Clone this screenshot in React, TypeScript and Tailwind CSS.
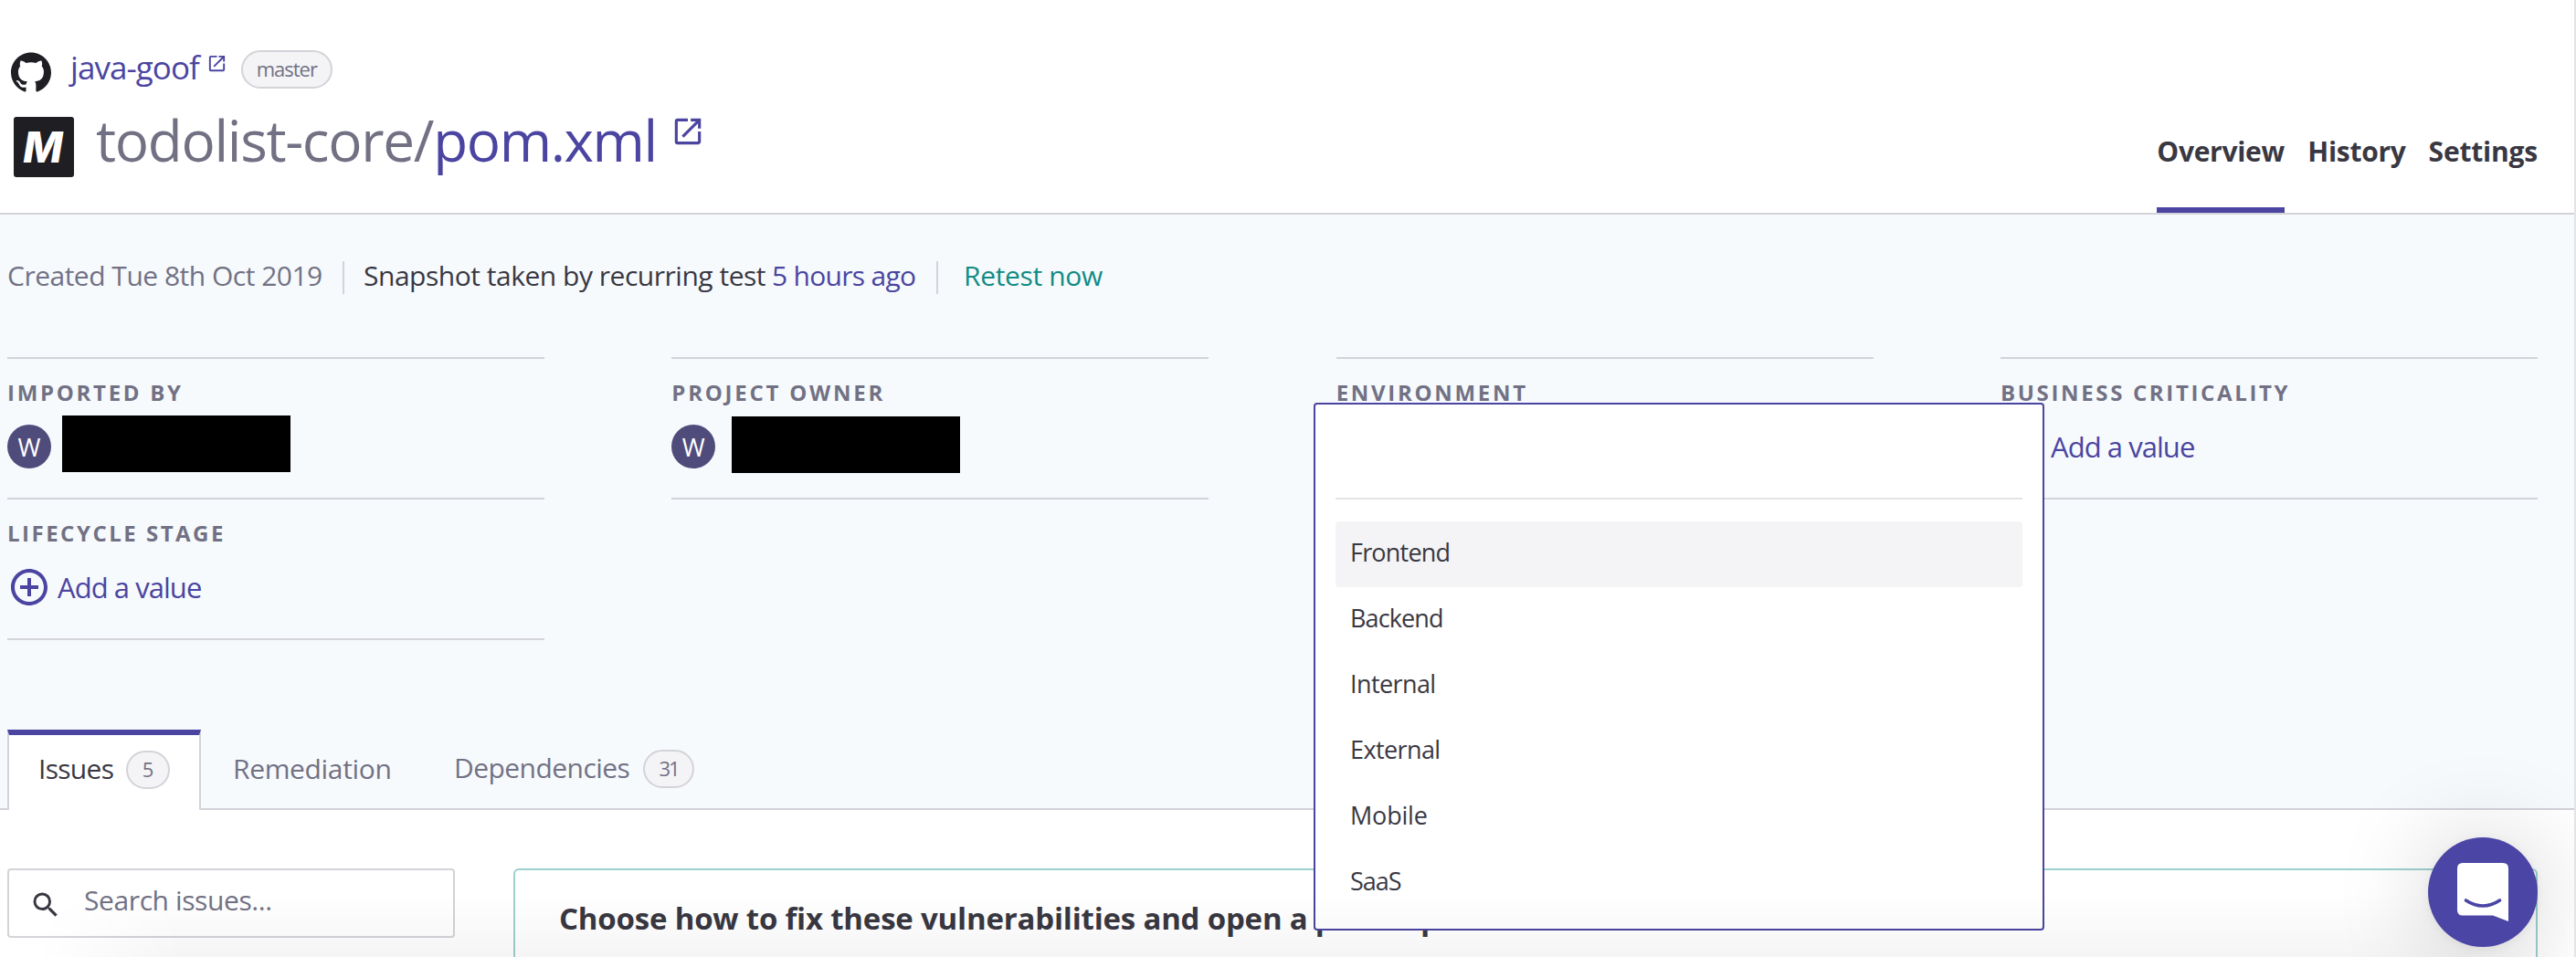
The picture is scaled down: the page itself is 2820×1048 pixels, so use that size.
import type { ReactNode } from 'react';
import { SiGithub } from 'react-icons/si';
import { MdAddCircleOutline, MdOpenInNew, MdSearch } from 'react-icons/md';

const ENVIRONMENTS = [
  { name: 'Frontend', tracking: 'tracking-[-0.8px]' },
  { name: 'Backend', tracking: 'tracking-[-0.9px]' },
  { name: 'Internal', tracking: 'tracking-[-0.6px]' },
  { name: 'External', tracking: 'tracking-[-0.6px]' },
  { name: 'Mobile', tracking: 'tracking-[-0.2px]' },
  { name: 'SaaS', tracking: 'tracking-[-1px]' },
];

function Attribute({
  label,
  tracking,
  className = '',
  children,
}: {
  label: string;
  tracking: string;
  className?: string;
  children?: ReactNode;
}) {
  return (
    <div className={`relative h-[156px] border-y-2 border-[#d3d3d9] pt-[22px] ${className}`}>
      <div className={`h-[30px] text-[24px] leading-[30px] font-bold whitespace-nowrap text-[#727184] ${tracking}`}>
        {label}
      </div>
      <div className="mt-[13px] flex h-[62px] items-center">{children}</div>
    </div>
  );
}

function Avatar() {
  return (
    <span className="flex size-12 shrink-0 items-center justify-center rounded-full bg-[#4f4c7c] text-[27px] leading-none text-white">
      W
    </span>
  );
}

function AddValue() {
  return (
    <a className="flex items-center text-[31px] leading-[42px] tracking-[-0.95px] whitespace-nowrap text-[#4b45a1]">
      <MdAddCircleOutline className="mr-[7px] size-12 shrink-0" />
      <span>Add a value</span>
    </a>
  );
}

function Badge({ className, children }: { className: string; children: ReactNode }) {
  return (
    <span
      className={`flex h-[42px] items-center justify-center rounded-full border-2 border-[#d3d3d9] bg-[#f4f4f6] pb-[3px] text-[22px] leading-none text-[#727184] ${className}`}
    >
      {children}
    </span>
  );
}

function EnvironmentMenu() {
  return (
    <div className="absolute top-[48px] left-[-24.67px] z-10 h-[578px] w-[800px] rounded-[4px] border-2 border-[#4b45a1] bg-white px-[22px]">
      <div className="h-[104px] border-b-2 border-[#e3e3e8]" />
      <ul className="mt-6">
        {ENVIRONMENTS.map((env, i) => (
          <li
            key={env.name}
            className={`flex h-[72px] items-center rounded-[4px] pb-[3px] pl-[16px] text-[27px] text-[#393842] ${env.tracking} ${i === 0 ? 'bg-[#f4f4f6]' : ''}`}
          >
            {env.name}
          </li>
        ))}
      </ul>
    </div>
  );
}

export default function App() {
  return (
    <div className="relative h-[1048px] w-[2820px] overflow-hidden border-r-2 border-[#e4e4e6] bg-white font-['Open_Sans','Noto_Sans',sans-serif] text-[#393842]">
      <header className="flex h-[235px] justify-between border-b-2 border-[#d3d3d9] pr-10">
        <div className="pt-[55px]">
          <div className="flex h-[42px] items-center">
            <SiGithub className="mt-[5px] ml-3 size-11 text-[#1f1e23]" />
            <a className="ml-[21px] pb-[4px] text-[35px] leading-[42px] tracking-[-0.95px] text-[#4b45a1]">java-goof</a>
            <MdOpenInNew className="mb-[14px] ml-[8px] size-[23px] text-[#4b45a1]" />
            <Badge className="ml-[15px] w-[100px] tracking-[-1px]">master</Badge>
          </div>
          <div className="mt-[16px] flex h-[80px] items-center">
            <span className="mt-4 ml-[15px] flex size-[66px] items-center justify-center rounded-[3px] bg-[#1f1e23] pr-[2px] font-['Inter'] text-[46px] leading-none font-extrabold text-white italic">
              M
            </span>
            <h1 className="ml-[24px] flex items-center text-[62px] leading-[80px] font-normal whitespace-nowrap text-[#727184]">
              <span className="tracking-[-1.3px]">todolist-core/</span>
              <a className="tracking-[-1.4px] text-[#4b45a1]">pom.xml</a>
            </h1>
            <MdOpenInNew className="mb-[18px] ml-[15px] size-[38px] text-[#4b45a1]" />
          </div>
        </div>
        <nav className="flex items-end gap-[25px] text-[30px] leading-[40px] font-bold tracking-[-0.3px]">
          <a className="w-[140px] border-b-[6px] border-[#4b45a1] pb-[41px]">Overview</a>
          <a className="pb-[47px]">History</a>
          <a className="pb-[47px] tracking-[-0.2px]">Settings</a>
        </nav>
      </header>

      <section className="h-[652px] border-b-2 border-[#d3d3d9] bg-[#f6fafd] pt-[51px]">
        <div className="flex h-9 items-center pl-2 text-[30px] leading-9 whitespace-nowrap">
          <span className="w-[367px] pb-[5px] tracking-[-0.5px] text-[#727184]">Created Tue 8th Oct 2019</span>
          <span className="h-9 w-[2px] bg-[#d3d3d9]" />
          <span className="ml-[21px] w-[447px] pb-[5px] tracking-[-0.48px]">Snapshot taken by recurring test</span>
          <a className="w-[180px] pb-[5px] tracking-[-0.7px] text-[#4b45a1]">5 hours ago</a>
          <span className="h-9 w-[2px] bg-[#d3d3d9]" />
          <a className="ml-[28px] pb-[5px] tracking-[-0.35px] text-[#118b84]">Retest now</a>
        </div>

        <div className="mt-[69px] grid grid-cols-4 gap-x-[139.33px] pr-10 pl-2">
          <Attribute label="IMPORTED BY" tracking="tracking-[2.7px]">
            <Avatar />
            <span className="mb-[6px] ml-3 h-[62px] w-[250px] bg-black" />
          </Attribute>
          <Attribute label="PROJECT OWNER" tracking="tracking-[2.75px]">
            <Avatar />
            <span className="mb-[4px] ml-[18px] h-[62px] w-[250px] bg-black" />
          </Attribute>
          <Attribute label="ENVIRONMENT" tracking="tracking-[2.7px]">
            <EnvironmentMenu />
          </Attribute>
          <Attribute label="BUSINESS CRITICALITY" tracking="tracking-[2.65px]">
            <AddValue />
          </Attribute>
          <Attribute label="LIFECYCLE STAGE" tracking="tracking-[2.5px]" className="-mt-[2px]">
            <AddValue />
          </Attribute>
        </div>

        <div className="mt-[98px] flex h-[88px] pl-2 text-[30px] leading-[40px] whitespace-nowrap text-[#727184]">
          <a className="flex h-[88px] w-[212px] items-center border-x-2 border-t-[6px] border-x-[#d3d3d9] border-t-[#4b45a1] bg-white pb-[6px] pl-[32px] text-[#393842]">
            <span className="w-[96px] pb-[2px] tracking-[-0.7px]">Issues</span>
            <Badge className="w-12">5</Badge>
          </a>
          <a className="flex items-center pb-[3px] pl-[35px] tracking-[-0.35px]">
            <span className="w-[242px]">Remediation</span>
          </a>
          <a className="flex items-center pb-[2px]">
            <span className="w-[207px] pb-[2px] tracking-[-0.55px]">Dependencies</span>
            <Badge className="w-14 tracking-[-2px]">31</Badge>
          </a>
        </div>
      </section>

      <main className="flex items-start gap-16 pt-16 pr-10 pl-2">
        <div className="flex h-[76px] w-[490px] shrink-0 items-center rounded-[4px] border-2 border-[#d3d3d9] bg-white pl-[22px]">
          <MdSearch className="mt-[4px] size-9" />
          <span className="ml-[24px] pb-[7px] text-[30px] leading-[40px] tracking-[-0.4px] text-[#727184]">Search issues...</span>
        </div>
        <div className="h-[160px] grow rounded-[6px] border-2 border-[#9dd0ce] bg-white pt-[33px] pl-[48px]">
          <h2 className="text-[33px] leading-[40px] font-bold tracking-[-0.2px] whitespace-nowrap">
            Choose how to fix these vulnerabilities and open a pull request
          </h2>
        </div>
      </main>

      <div className="pointer-events-none absolute right-0 bottom-0 left-0 z-20 h-[70px] bg-linear-to-b from-transparent to-black/[0.04] [mask-image:linear-gradient(to_right,transparent_40px,black_200px,black_2700px,transparent)]" />

      <button className="absolute top-[917px] right-[40px] z-30 flex size-[120px] items-center justify-center rounded-full bg-[#4b45a5] shadow-[0_2px_12px_rgba(0,0,0,0.06),0_4px_110px_rgba(0,0,0,0.2)]">
        <svg viewBox="0 0 56 64" className="h-16 w-14" fill="none">
          <path d="M6 0H50Q56 0 56 6V64L39 57.5H6Q0 57.5 0 51.5V6Q0 0 6 0Z" fill="#fff" />
          <path d="M9.5 41Q28 53 46.5 41" stroke="#4b45a5" strokeWidth="3.6" strokeLinecap="round" />
        </svg>
      </button>
    </div>
  );
}
